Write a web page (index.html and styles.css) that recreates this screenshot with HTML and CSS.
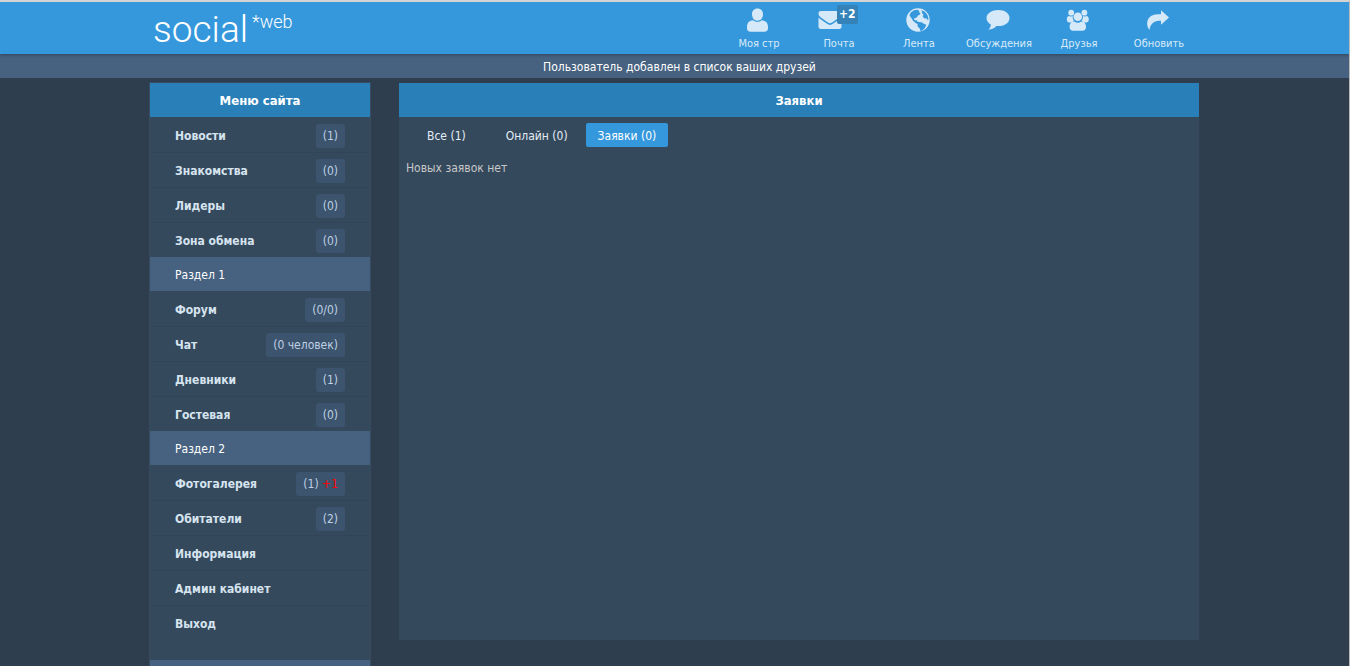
FILE: index.html
```
<!DOCTYPE html>
<html lang="ru">
<head>
<meta charset="utf-8">
<title>Заявки</title>
<link rel="stylesheet" href="styles.css">
</head>
<body>
<header class="header">
  <div class="wrap header-inner">
    <a class="logo" href="#"><span class="logo-main">social</span><span class="logo-sub">*web</span></a>
    <nav class="topnav">
      <a href="#"><svg viewBox="0 0 24 24"><path d="M11.500 .5C8.200 .5 6 2.800 6 6.200c0 3.700 2.400 6.500 5.500 6.500S17 9.900 17 6.200C17 2.800 14.800 .5 11.500 .5zM7.200 12.200C3.300 12.600 1 14.500 1 19v1.500C1 22.500 2.300 23.700 4.500 23.700h14c2.200 0 3.500-1.200 3.500-3.200V19c0-4.500-2.300-6.400-6.200-6.800-2.600 2.200-6 2.200-8.600 0z"/></svg><span>Моя стр</span></a>
      <a href="#"><span class="badge">+2</span><svg class="mail" viewBox="0 0 24 24"><path d="M.5 5.500c0-1.500.8-2.500 2.200-2.500h18.600c1.400 0 2.200 1 2.200 2.500 0 1.600-.9 2.800-2.400 3.900l-7 5c-1.500 1-2.700 1-4.200 0l-7-5C1.400 8.300.5 7.100.5 5.500zM.5 9.500c.4.600 1 1.100 1.600 1.500l6.600 4.600c2.400 1.700 4.200 1.700 6.600 0l6.600-4.600c.6-.4 1.200-.9 1.600-1.500v9.300c0 1.300-.9 2.200-2.200 2.200H2.700C1.400 21 .5 20.100.5 18.800z"/></svg><span>Почта</span></a>
      <a href="#"><svg viewBox="0 0 24 24"><circle cx="12" cy="12" r="11.700"/><path class="land" d="M4.500 4.800L8 2.300l3.500-.5 2 1.200-1 1.200 1.600.4.2 1.600-2.200 1.200-1.700 2.400-1.800.2-.6 1.600 1.300.8 1.300-.5.6 1.700 1.800.4 2.500.3 2.800 1.700 2 .8-1.400 3.200-2.400 2.200-2 1.100-.6-2.600-2.200-2.200-.2-2.600-2-.9-2.500-2.300-1.800-3-1.700-2.200zM15.500 2.300l3 1.300 2.700 3 1.400 4-.6 1.700-1.700-2-1.900.3-1.700-2 .8-2-1.200-.9z"/></svg><span>Лента</span></a>
      <a href="#"><svg viewBox="0 0 24 24"><path d="M12.500 2C6 2 .5 5.300 .5 10c0 2.800 1.700 5 4.300 6.400-.2 2.400-1 3.900-2.500 5.300 3.600-.3 6.400-1.700 8-3.700l2.200.1c6.300 0 11-3.400 11-8.100S18.800 2 12.500 2z"/></svg><span>Обсуждения</span></a>
      <a href="#"><svg viewBox="0 0 24 24"><circle cx="5.200" cy="4.700" r="2.900"/><circle cx="18.400" cy="4.700" r="2.900"/><circle cx="11.800" cy="8.700" r="4.300"/><path d="M3.200 7.900c1.200.7 2.300.7 3.500.2-.2 2 .2 3.400 1.200 4.700l-2 1.600H3C1.500 14.400.8 13 .8 11.300c0-1.900.9-3.200 2.400-3.400zM20.400 7.900c-1.200.7-2.300.7-3.500.2.2 2-.2 3.400-1.200 4.700l2 1.600h2.900c1.500 0 2.200-1.400 2.200-3.100 0-1.900-.9-3.200-2.400-3.400zM8.200 13.500c2.400 1.600 4.800 1.600 7.200 0 3 .3 4.600 2.200 4.600 5.300 0 2.500-1.200 3.900-3.500 3.900H7.100c-2.300 0-3.500-1.400-3.500-3.900 0-3.100 1.600-5 4.600-5.300z"/></svg><span>Друзья</span></a>
      <a href="#"><svg viewBox="0 0 24 24"><path d="M15 2.200l8 7.300-8 7.300v-4C9 12.600 4.600 14.600 3.500 21.900.4 18.400.4 12.600 3.300 9.500c2.500-2.700 6.500-3.200 11.700-3.200z"/></svg><span>Обновить</span></a>
    </nav>
  </div>
</header>
<p class="notice">Пользователь добавлен в список ваших друзей</p>
<div class="wrap columns">
  <aside class="sidebar">
    <h2 class="title">Меню сайта</h2>
    <ul class="menu">
      <li><a href="#">Новости</a><span class="count">(1)</span></li>
      <li><a href="#">Знакомства</a><span class="count">(0)</span></li>
      <li><a href="#">Лидеры</a><span class="count">(0)</span></li>
      <li><a href="#">Зона обмена</a><span class="count">(0)</span></li>
    </ul>
    <h3 class="section">Раздел 1</h3>
    <ul class="menu">
      <li><a href="#">Форум</a><span class="count">(0/0)</span></li>
      <li><a href="#">Чат</a><span class="count">(0 человек)</span></li>
      <li><a href="#">Дневники</a><span class="count">(1)</span></li>
      <li><a href="#">Гостевая</a><span class="count">(0)</span></li>
    </ul>
    <h3 class="section">Раздел 2</h3>
    <ul class="menu menu-last">
      <li><a href="#">Фотогалерея</a><span class="count">(1) <span class="new">+1</span></span></li>
      <li><a href="#">Обитатели</a><span class="count">(2)</span></li>
      <li><a href="#">Информация</a></li>
      <li><a href="#">Админ кабинет</a></li>
      <li><a href="#">Выход</a></li>
    </ul>
    <div class="sidebar-foot"></div>
  </aside>
  <main class="content">
    <h1 class="title">Заявки</h1>
    <nav class="tabs">
      <a href="#">Все (1)</a>
      <a href="#">Онлайн (0)</a>
      <a class="active" href="#">Заявки (0)</a>
    </nav>
    <p class="empty">Новых заявок нет</p>
  </main>
</div>
</body>
</html>
```
FILE: styles.css
```
* { box-sizing: border-box; }
html { height: 100%; overflow: hidden; }
body {
  margin: 0;
  min-height: 100%;
  background: #2e3e4f;
  border-top: 2px solid #d4d4d4;
  border-right: 1px solid #b8b8b8;
  color: #d6e4ef;
  font: 12px/16px Tahoma, "DejaVu Sans Condensed", "Noto Sans", sans-serif;
}
a { color: inherit; text-decoration: none; }
h1, h2, h3, p, ul { margin: 0; padding: 0; font-size: 12px; }
ul { list-style: none; }
.wrap { max-width: 1051px; margin: 0 auto; padding-right: 1px; }
.header { background: #3598dc; position: relative; box-shadow: 0 1px 3px rgba(0, 0, 0, .3); }
.header-inner { display: flex; justify-content: space-between; height: 52px; }
.logo {
  display: flex;
  gap: 4px;
  padding: 10px 0 0 4px;
  color: #fff;
  font-family: Roboto, "Liberation Sans", sans-serif;
  font-weight: 300;
}
.logo-main { font-size: 37px; line-height: 36px; }
.logo-sub { font-size: 18px; line-height: 20px; }
.topnav { display: flex; font-size: 11px; }
.topnav a {
  position: relative;
  display: flex;
  flex-direction: column;
  align-items: center;
  width: 80px;
  padding-top: 6px;
  line-height: 14px;
  color: #d9eaf8;
}
.topnav svg { width: 24px; height: 24px; margin: 0 2px 5px 0; fill: #d6e9f8; }
.topnav .mail { margin-right: 18px; }
.topnav .land { fill: #3598dc; }
.badge {
  position: absolute;
  top: 3px;
  left: 38px;
  padding: 2px 2px 3px;
  border-radius: 2px;
  background: #3582b8;
  color: #fff;
  font-size: 12px;
  font-weight: bold;
}
.notice {
  padding: 5px 0 3px 10px;
  background: #466280;
  color: #fff;
  text-align: center;
}
.columns { display: flex; align-items: flex-start; gap: 28px; padding-top: 4px; }
.sidebar { flex: 0 0 222px; border: 1px solid #384b5f; background: #35495d; }
.title {
  padding: 10px 0 8px;
  background: #2980b9;
  color: #fff;
  font-size: 13px;
  text-align: center;
}
.menu li {
  display: flex;
  align-items: center;
  justify-content: space-between;
  height: 35px;
  padding: 1px 25px 0;
  border-top: 1px solid #31445a;
  font-weight: bold;
}
.menu li:first-child { border-top-color: transparent; }
.menu-last { padding-bottom: 20px; }
.count {
  padding: 4px 7px;
  border-radius: 3px;
  background: #3d546e;
  color: #bfd0e4;
  font-weight: normal;
}
.new { color: #f00; }
.section { padding: 10px 25px 8px; background: #466280; color: #fff; font-weight: normal; }
.sidebar-foot { height: 34px; background: #466280; }
.content { flex: 1; min-height: 557px; margin-top: 1px; background: #35495d; }
.tabs { display: flex; gap: 6px; padding: 6px 16px; }
.tabs a { padding: 5px 12px 3px; border-radius: 2px; color: #e4edf5; }
.tabs a:first-child { margin-right: 10px; }
.tabs .active { background: #3598dc; color: #fff; }
.empty { padding: 7px; color: #c8c8c8; }
```
